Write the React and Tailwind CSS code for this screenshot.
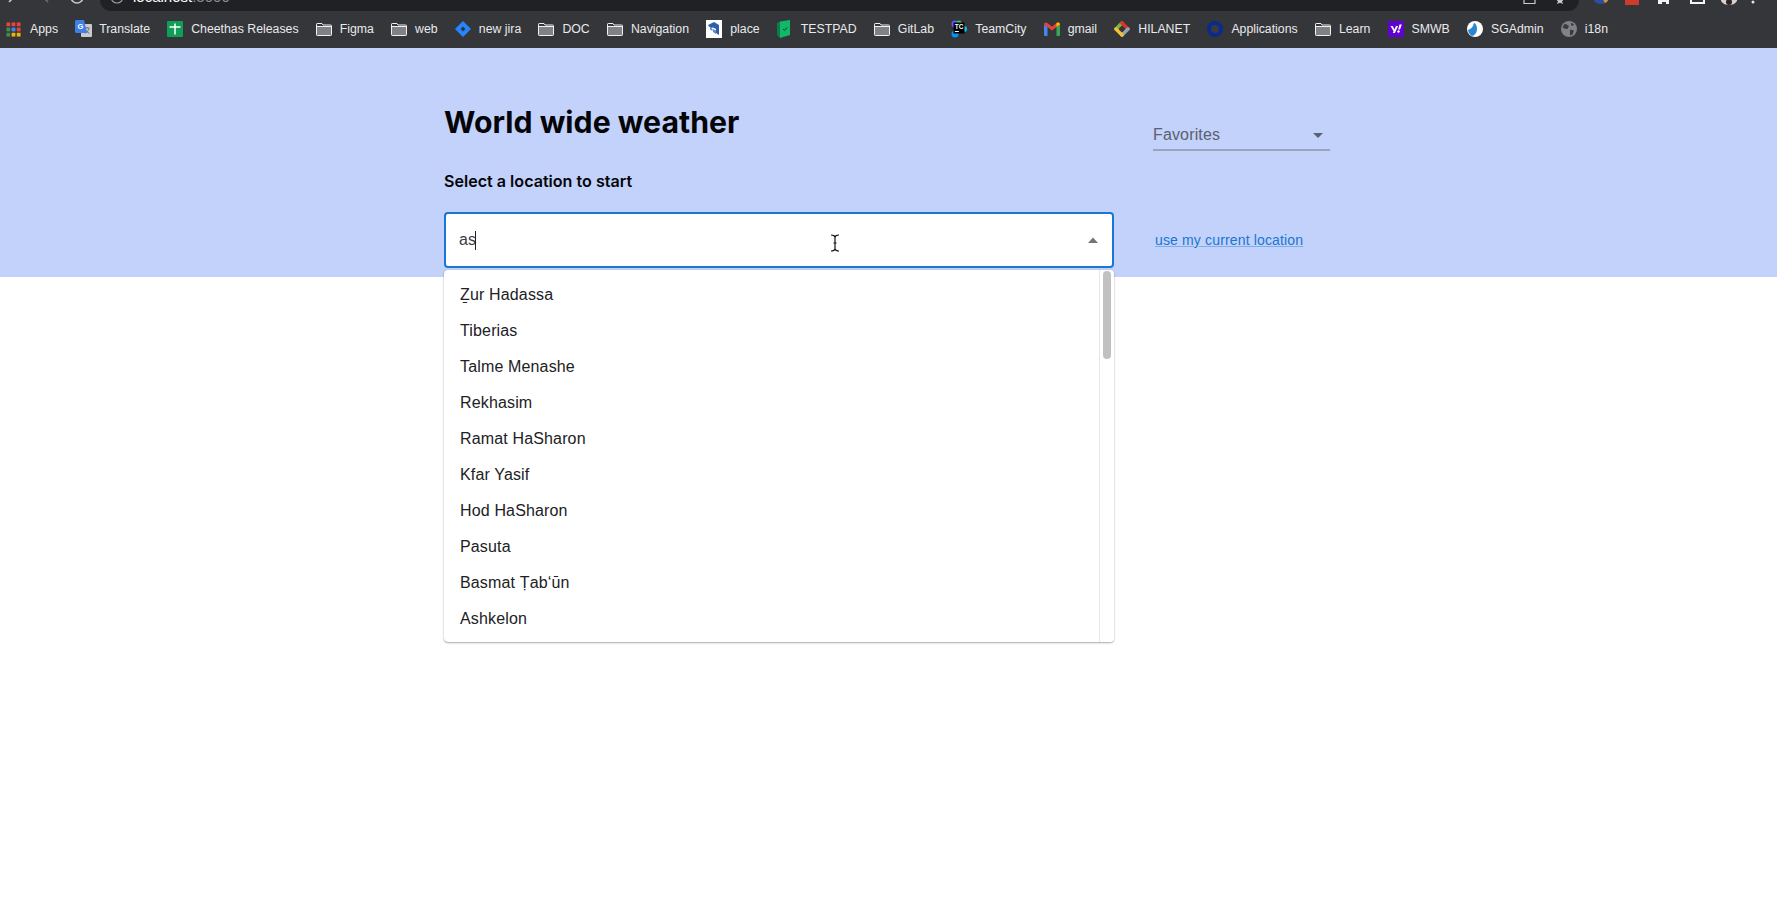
import React from "react";

const Folder = () => (
  <svg width="16" height="13" viewBox="0 0 16 13" fill="none" className="shrink-0">
    <path d="M.5 1.200A.7.7 0 0 1 1.200 .5H6L7 2H14.800A.7.7 0 0 1 15.500 2.700V11.800A.7.7 0 0 1 14.800 12.500H1.200A.7.700 0 0 1 .5 11.800z" fill="#35363a" stroke="#f1f1f2" strokeWidth="1" />
    <rect x="1" y="4" width="14" height="8" fill="#808185" />
    <path d="M.5 3.500H15.500" stroke="#f1f1f2" strokeWidth="1" />
  </svg>
);

const Apps = () => (
  <svg width="15" height="15" viewBox="0 0 16 16" className="shrink-0">
    {[["#e8453c", "#e8453c", "#e8453c"], ["#3d8f4d", "#4285f4", "#e8453c"], ["#3d8f4d", "#f4b400", "#f4b400"]].map((r, y) =>
      r.map((c, x) => <rect key={x + "-" + y} x={x * 5.5 + 0.5} y={y * 5.5 + 0.5} width="4" height="4" fill={c} />)
    )}
  </svg>
);

const Translate = () => (
  <svg width="17" height="18" viewBox="0 0 17 18" className="shrink-0">
    <rect x="6" y="4" width="11" height="13" rx="1" fill="#c9cbce" />
    <path d="M9.5 8h5M12 7v1M10.5 13c2-1 3-3 3.5-5M10.5 9.5c.8 1.800 2 3 4 3.800" stroke="#6d7074" strokeWidth="1" fill="none" />
    <path d="M1.500 0h7.500l3 13H1.500A1.500 1.500 0 0 1 0 11.500V1.500A1.500 1.500 0 0 1 1.500 0z" fill="#3f7fe8" />
    <text x="5.500" y="9" fontSize="7.500" fontWeight="700" fill="#fff" textAnchor="middle" fontFamily="'Liberation Sans',sans-serif">G</text>
  </svg>
);

const Cheethas = () => (
  <svg width="16" height="16" viewBox="0 0 16 16" className="shrink-0">
    <rect width="16" height="16" rx="1" fill="#0f9d58" />
    <path d="M2.500 6h11M8 2.500v11" stroke="#fff" strokeWidth="1.500" />
  </svg>
);

const Jira = () => (
  <svg width="16" height="16" viewBox="0 0 16 16" className="shrink-0">
    <path d="M8 0l8 8-8 8-8-8z" fill="#2684ff" />
    <path d="M8 5.500L10.500 8 8 10.500 5.500 8z" fill="#35363a" />
  </svg>
);

const Place = () => (
  <svg width="16" height="18" viewBox="0 0 16 18" className="shrink-0">
    <rect width="16" height="18" fill="#fff" />
    <path d="M2 5l6-3 5 3v10l-3-2V9L7 7.500 5 8 3 6.500z" fill="#2f5fa8" />
    <path d="M7 9l3 1.500V14L7 12z M4 7.500l2.500 1.500v2L4 9.500z" fill="#5a8ad0" />
  </svg>
);

const Testpad = () => (
  <svg width="14" height="18" viewBox="0 0 14 18" className="shrink-0">
    <path d="M3 1.500L13 0v15l-10 3z" fill="#12b76a" />
    <path d="M3 1.500L0 3v12l3 3z" fill="#0b7d4a" />
    <path d="M6 9l1.500 1.500L10 7.500" stroke="#0b3d26" strokeWidth="1" fill="none" />
  </svg>
);

const TeamCity = () => (
  <svg width="16" height="18" viewBox="0 0 16 18" className="shrink-0">
    <circle cx="4" cy="4" r="3.500" fill="#6b57ff" />
    <circle cx="13" cy="9" r="3" fill="#07c3f2" />
    <circle cx="4" cy="14" r="3.500" fill="#0b8ff0" />
    <circle cx="8" cy="3" r="2.500" fill="#27d07a" />
    <rect x="2.500" y="2.500" width="11" height="11" fill="#000" />
    <text x="8" y="8.800" fontSize="6.500" fontWeight="700" fill="#fff" textAnchor="middle" fontFamily="'Liberation Sans',sans-serif">TC</text>
    <rect x="3.800" y="11" width="4" height="1" fill="#fff" />
  </svg>
);

const Gmail = () => (
  <svg width="16" height="14" viewBox="0 0 16 14" className="shrink-0">
    <path d="M0 2.500V13a1 1 0 0 0 1 1h2.500V5z" fill="#4285f4" />
    <path d="M16 2.500V13a1 1 0 0 1-1 1h-2.500V5z" fill="#34a853" />
    <path d="M0 2.500C0 .500 2 0 3 .800L8 4.800l5-4c1-.800 3-.300 3 1.700L12.500 5 8 8.500 3.500 5z" fill="#ea4335" />
    <path d="M12.500 5L16 2.500C16 .500 14 0 13 .800l-.500.400z" fill="#fbbc04" />
  </svg>
);

const Hilanet = () => (
  <svg width="16" height="18" viewBox="0 0 16 18" className="shrink-0">
    <path d="M2 9L8 3" stroke="#7cb342" strokeWidth="3.500" strokeLinecap="round" />
    <path d="M8 3L14 9" stroke="#d8342c" strokeWidth="3.500" strokeLinecap="round" />
    <path d="M14 9L8 15" stroke="#8fa8b8" strokeWidth="3.500" strokeLinecap="round" />
    <path d="M8 15L2 9" stroke="#f2c230" strokeWidth="3.500" strokeLinecap="round" />
    <circle cx="8" cy="9" r="2.500" fill="#35363a" />
  </svg>
);

const Applications = () => (
  <svg width="16" height="16" viewBox="0 0 16 16" className="shrink-0">
    <circle cx="8" cy="8" r="6" fill="#3a3b3f" stroke="#0a2a8c" strokeWidth="4" />
  </svg>
);

const Yahoo = () => (
  <svg width="16" height="16" viewBox="0 0 16 16" className="shrink-0">
    <rect width="16" height="16" fill="#5f01d1" />
    <path d="M2.500 5h2.200l1.700 3.600L8 5h2.100l-3.200 7H4.800l.8-1.800z" fill="#fff" />
    <path d="M11.500 3.500h2.300L12 8.500h-1.800z" fill="#fff" />
    <circle cx="10.500" cy="10.500" r="1.200" fill="#fff" />
  </svg>
);

const SGAdmin = () => (
  <svg width="16" height="18" viewBox="0 0 16 18" className="shrink-0">
    <circle cx="8" cy="9" r="8" fill="#fff" />
    <path d="M1 10c3-1 5-3 6-7 1 0 3 2 3 6 0 4-3 7-5 7-2-1-3.500-3-4-6z" fill="#2a86cf" />
  </svg>
);

const Globe = () => (
  <svg width="16" height="16" viewBox="0 0 16 16" className="shrink-0">
    <circle cx="8" cy="8" r="8" fill="#7f8286" />
    <path d="M4 2.500L8 5 6.500 8 3 7.500 1.500 6zM9 8.500l4 1-1.500 4L9 14.500zM10 1.500l3 2-1.500 1.500L10 4z" fill="#3a3b3f" />
  </svg>
);

const bookmarks = [
  [Apps, "Apps"], [Translate, "Translate"], [Cheethas, "Cheethas Releases"], [Folder, "Figma"], [Folder, "web"],
  [Jira, "new jira"], [Folder, "DOC"], [Folder, "Navigation"], [Place, "place"], [Testpad, "TESTPAD"],
  [Folder, "GitLab"], [TeamCity, "TeamCity"], [Gmail, "gmail"], [Hilanet, "HILANET"], [Applications, "Applications"],
  [Folder, "Learn"], [Yahoo, "SMWB"], [SGAdmin, "SGAdmin"], [Globe, "i18n"],
];

const cities = ["Ẕur Hadassa", "Tiberias", "Talme Menashe", "Rekhasim", "Ramat HaSharon", "Kfar Yasif", "Hod HaSharon", "Pasuta", "Basmat Ṭab‘ūn", "Ashkelon"];

function Chrome() {
  return (
    <div className="h-[48px] bg-[#35363a] overflow-hidden shrink-0">
      <div className="h-[11px] flex items-end overflow-hidden">
        <div className="w-[100px] h-[11px] flex items-end shrink-0 overflow-hidden">
          <svg width="100" height="11" viewBox="0 0 100 11" fill="none" stroke="#c8c9cb" strokeWidth="1.600">
            <path d="M14 -3L9 2" />
            <path d="M43 -3L48 2" stroke="#6f7073" />
            <path d="M71 -3a6 6 0 0 0 12 0" />
          </svg>
        </div>
        <div className="w-[1479px] h-[11px] bg-[#202124] rounded-b-[14px] shrink-0 flex overflow-hidden relative">
          <svg width="24" height="11" viewBox="0 0 24 11" fill="none" stroke="#9a9b9e" strokeWidth="1.200" className="shrink-0 ml-[10px]">
            <circle cx="7" cy="-3" r="6" />
          </svg>
          <div className="-mt-[12px] ml-[-1px] text-[15px] leading-[17px] h-[17px] text-white whitespace-nowrap font-['Liberation_Sans',sans-serif]">
            localhost<span className="text-[#8d8e91]">:3000</span>
          </div>
          <div className="ml-auto flex items-start gap-[16px] pr-[12px]">
            <svg width="14" height="11" viewBox="0 0 14 11" fill="none" stroke="#c8c9cb" strokeWidth="1.200"><path d="M1 -3V3.500H12V-3" /></svg>
            <svg width="14" height="11" viewBox="0 0 14 11"><path d="M2 -2H12L9 1.500L10 4L7 2.800L4 4L5 1.500z" fill="#c8c9cb" /></svg>
          </div>
        </div>
        <div className="flex-1 h-[11px] relative">
          <svg width="198" height="11" viewBox="0 0 198 11" className="block">
            <path d="M15 -4H29V0a7 4 0 0 1-14 0z" fill="#2a4fa0" />
            <path d="M22 -4H29V0a7 4 0 0 1-3 3z" fill="#e8912d" />
            <rect x="46" y="-3" width="14" height="8" fill="#d13b2e" />
            <path d="M79 -2H90V4H87V2H83V4H79z" fill="#f1f1f2" />
            <path d="M111 -2H126V4H111zM113 -2V2H124V-2z" fill="#f5f5f5" fillRule="evenodd" />
            <path d="M142 -2H158V1C156 4 153 5 150 5S144 4 142 1z" fill="#d8d0cc" />
            <circle cx="150" cy="2" r="3" fill="#2b2526" />
            <circle cx="174" cy="2" r="1.500" fill="#e6e6e6" />
          </svg>
        </div>
      </div>
      <div className="h-[36px] flex items-center gap-[17.2px] pl-[6px] font-['Liberation_Sans',sans-serif] text-[12.3px] text-[#e8eaed] whitespace-nowrap">
        {bookmarks.map(([Icon, label]) => (
          <div key={label} className="flex items-center shrink-0">
            <div className="w-[24px] flex items-center">
              <Icon />
            </div>
            <span>{label}</span>
          </div>
        ))}
      </div>
    </div>
  );
}

export default function App() {
  return (
    <div className="min-h-[918px] bg-white flex flex-col overflow-hidden font-['Liberation_Sans',sans-serif]">
      <Chrome />
      <div className="h-[229px] bg-[#c2d2fa] shrink-0">
        <div className="mx-auto w-[889px] flex">
          <div className="w-[670px] shrink-0">
            <h1 className="mt-[54px] h-[40px] leading-[40px] text-[30.25px] font-bold text-[#050508] font-['Inter',sans-serif]">World wide weather</h1>
            <div className="mt-[29px] h-[20px] leading-[20px] text-[16.1px] font-semibold text-[#050508] font-['Inter',sans-serif]">Select a location to start</div>
            <div className="relative mt-[21px]">
              <div className="h-[56px] bg-white border-2 border-[#1976d2] rounded-[4px] flex items-center pl-[13px] pr-[13px]">
                <span className="text-[16px] text-[#3c3c3f] leading-[24px] tracking-[0.15px]">as</span>
                <span className="w-[1px] h-[19px] bg-[#202124] -ml-[1px]" />
                <svg width="12" height="6" viewBox="0 0 12 6" className="ml-auto"><path d="M1 6L6 0.500L11 6z" fill="#757575" /></svg>
              </div>
              <svg width="10" height="18" viewBox="0 0 10 18" fill="none" stroke="#111" strokeWidth="1.200" className="absolute left-[386px] top-[22px]">
                <path d="M1 1C3 1 4.500 1.500 5 3V15C4.500 16.500 3 17 1 17M9 1C7 1 5.500 1.500 5 3V15C5.500 16.500 7 17 9 17M3.500 9H6.500" />
              </svg>
              <div className="absolute z-10 left-0 right-0 top-[58px] h-[372px] bg-white rounded-[4px] flex overflow-hidden shadow-[0_1px_1px_-1px_rgba(0,0,0,0.3),0_1px_2px_rgba(0,0,0,0.3),0_0_1px_rgba(0,0,0,0.25)]">
                <ul className="flex-1 pt-[7px] text-[16px] text-[#212124] tracking-[0.15px]">
                  {cities.map((c) => (
                    <li key={c} className="h-[36px] leading-[36px] pl-[16px]">{c}</li>
                  ))}
                </ul>
                <div className="w-[15px] border-l border-[#e8e8e8] bg-white pt-[1px] pl-[3px]">
                  <div className="w-[8px] h-[88px] rounded-[4px] bg-[#c1c1c1]" />
                </div>
              </div>
            </div>
          </div>
          <div className="ml-[39px] w-[177px] shrink-0">
            <div className="mt-[72px] h-[31px] border-b-2 border-[#9aa3bf] flex items-center pt-[2px] pb-[1px] pr-[6px] text-[16px] text-[#5c6070] tracking-[0.15px]">
              <span>Favorites</span>
              <svg width="10" height="5" viewBox="0 0 10 5" className="ml-auto mr-[1px]"><path d="M0 0H10L5 5z" fill="#5c6070" /></svg>
            </div>
            <div className="mt-[79px] ml-[2px] text-[14px] leading-[20px]">
              <a className="text-[#1976d2] underline decoration-[#1976d2]/40 tracking-[0.15px]">use my current location</a>
            </div>
          </div>
        </div>
      </div>
    </div>
  );
}
